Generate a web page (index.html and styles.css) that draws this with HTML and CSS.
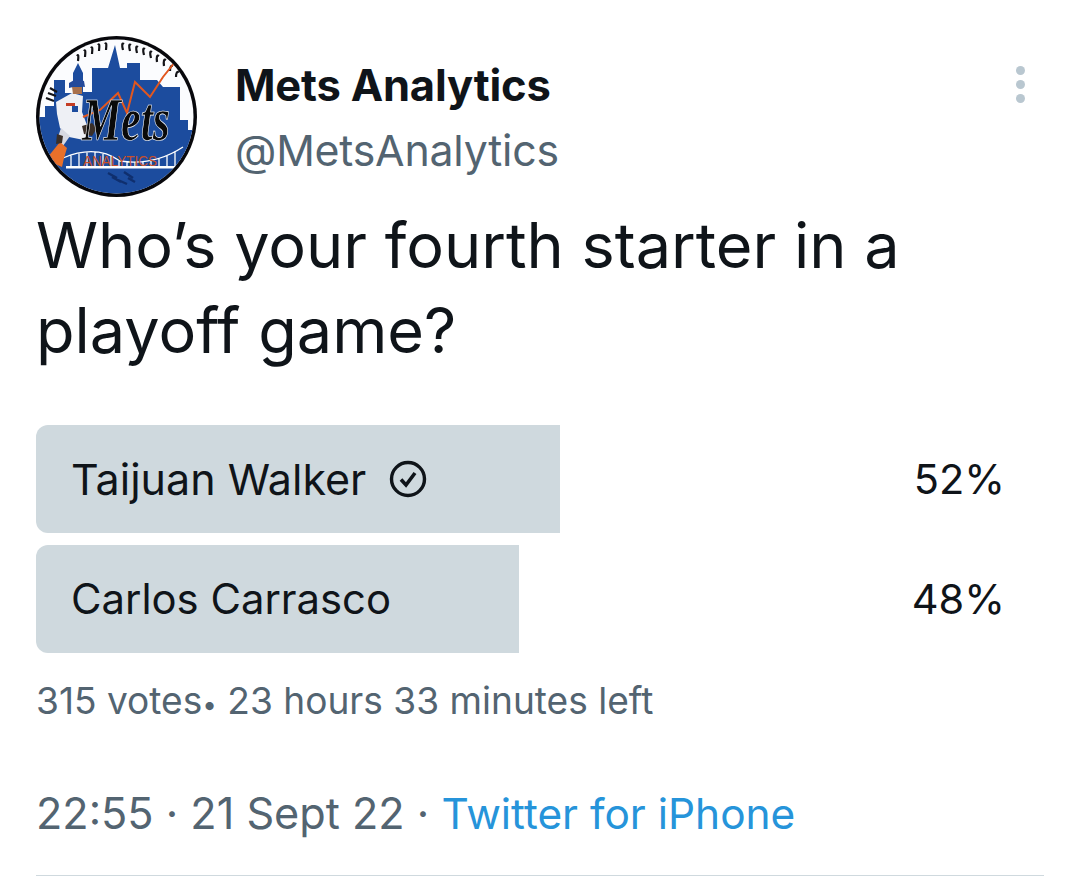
FILE: index.html
```html
<!DOCTYPE html>
<html lang="en">
<head>
<meta charset="utf-8">
<title>Mets Analytics poll</title>
<link rel="stylesheet" href="styles.css">
</head>
<body>
<main class="tweet">
  <header class="head">
    <svg class="avatar" viewBox="0 0 161 161" role="img" aria-label="Mets Analytics logo">
      <defs><clipPath id="ball"><circle cx="80.500" cy="80.500" r="77"/></clipPath></defs>
      <circle cx="80.500" cy="80.500" r="80.500" fill="#08080c"/>
      <g clip-path="url(#ball)">
        <rect width="161" height="161" fill="#fbfcfe"/>
        <path fill="#1c4c9e" d="M0 161V81H9V70H18V44H29V57H37V37L42 27 47 37V56H56V32H72L79 9 84 32H91V27H104V44H121L127 51H144V84H152V94H161V161Z"/>
        <path fill="none" stroke="#141418" stroke-width="2.200" d="M41 20q2-3 1 5M48 15q2-3 1 6M55 12q2-3 1 6M62 9q2-3 1 6M69 8q2-3 1 6M88 8q-3-2-1 6M95 9q-3-2-1 6M102 11q-3-2-1 6M109 13q-3-2-1 6M116 16q-3-2-1 6M123 20q-3-2-2 6M130 24q-3-2-2 6M137 30q-3-1-3 5M143 36q-3-1-3 5M14 52l7 4M12 57l8 3M10 62l8 3"/>
        <path fill="none" stroke="#fff" stroke-width="1.300" d="M27 122Q60 108 84 125 118 130 147 111M35 119V131M43 117V131M51 116V131M59 116V131M67 118V131M75 120V131M83 124V131M91 126V131M99 126V131M107 125V131M115 124V131M123 122V131M131 119V131M139 115V131"/>
        <path fill="#fff" d="M30 130H147V132.500H30Z"/>
        <path fill="none" stroke="#0f2f6e" stroke-width="2.400" d="M72 137l9 5M76 141l9 5M82 144l9 4M88 136l9 6M92 142l7 4"/>
        <path fill="#eef0f5" d="M20 66 36 57 47 60 46 76 54 97 48 104 33 101 24 92 21 78Z"/>
        <path fill="#1c4c9e" d="M36 70h6v6h-6z"/>
        <path fill="#c43d24" d="M30 67h9v3h-9z"/>
        <path fill="#24499a" d="M33 47l7-4 8 2 1 6-8-1-8 2Z"/>
        <path fill="#a8704c" d="M36 51h10v7h-9z"/>
        <path fill="#d7d9e2" d="M25 92 34 100 27 110 21 104Z"/>
        <path fill="#e8702a" d="M11 122 24 106 31 112 28 122 26 131 17 127Z"/>
        <path fill="#3a2f28" d="M21 98l6 2-1 7-6 1ZM46 90l10-3 5 5-5 8-8-2Z"/>
        <path fill="none" stroke="#e2571f" stroke-width="2" d="M47 81 64 74 82 57 91 77 99 46 114 61 127 41 139 26"/>
      </g>
      <g transform="translate(46 104) scale(1 1.400)"><text class="logo-script">Mets</text></g>
      <text class="logo-caption" x="47" y="130" textLength="74" lengthAdjust="spacingAndGlyphs">ANALYTICS</text>
    </svg>
    <div class="identity">
      <div class="name">Mets Analytics</div>
      <div class="handle">@MetsAnalytics</div>
    </div>
    <div class="more" aria-label="More"><i></i><i></i><i></i></div>
  </header>
  <p class="text">Who’s your fourth starter in a playoff game?</p>
  <section class="poll">
    <div class="option">
      <div class="bar bar-first">
        <span>Taijuan Walker</span>
        <svg class="check" viewBox="0 0 38 38" aria-hidden="true"><circle cx="19" cy="19" r="16.500" fill="none" stroke="#0f1419" stroke-width="3.400"/><path d="M12 19.500l5 5.500 9-12" fill="none" stroke="#0f1419" stroke-width="3.600"/></svg>
      </div>
      <span class="pct">52%</span>
    </div>
    <div class="option">
      <div class="bar bar-second"><span>Carlos Carrasco</span></div>
      <span class="pct">48%</span>
    </div>
  </section>
  <p class="votes">315 votes<span class="dot">•</span> 23 hours 33 minutes left</p>
  <p class="meta">22:55 · 21 Sept 22 · <a class="source">Twitter for iPhone</a></p>
  <hr class="rule">
</main>
</body>
</html>
```
FILE: styles.css
```css
* { box-sizing: border-box; }
html, body { margin: 0; padding: 0; background: #fff; }
body { font-family: Inter, "Liberation Sans", sans-serif; color: #0f1419; height: 891px; overflow: hidden; }
.tweet { padding: 36px 36px 0; }
.head { display: flex; align-items: flex-start; height: 161px; }
.avatar { width: 161px; height: 161px; flex: none; }
.logo-script { font-family: "Liberation Serif", serif; font-style: italic; font-weight: 700; font-size: 44px; fill: #0a0a0a; stroke: #fff; stroke-width: .5px; }
.logo-caption { font-family: "Liberation Sans", sans-serif; font-size: 14px; fill: #c9502a; }
.identity { margin-left: 38px; padding-top: 26px; }
.name { font-size: 43.500px; font-weight: 700; line-height: 46px; letter-spacing: -.2px; }
.handle { font-size: 42.800px; line-height: 46px; margin-top: 20px; color: #536471; letter-spacing: -.2px; }
.more { margin-left: auto; margin-right: 19px; margin-top: 30px; display: flex; flex-direction: column; gap: 5px; }
.more i { display: block; width: 9px; height: 9px; border-radius: 50%; background: #b9c7d0; }
.text { margin: 6px 0 0; font-size: 63px; line-height: 85px; width: 900px; }
.poll { margin-top: 52px; display: flex; flex-direction: column; gap: 12px; }
.option { display: flex; justify-content: space-between; align-items: center; height: 108px; padding-right: 39px; font-size: 43px; }
.bar { height: 108px; background: #cfd9de; border-radius: 12px 0 0 12px; display: flex; align-items: center; padding-left: 35px; gap: 23px; }
.bar-first { width: 524px; }
.bar-second { width: 483px; font-size: 41.800px; }
.pct { font-size: 41.500px; }
.check { width: 38px; height: 38px; flex: none; }
.votes { margin: 26px 0 0; font-size: 37.100px; line-height: 44px; color: #536471; }
.dot { font-size: 26px; line-height: 0; }
.meta { margin: 65px 0 0; font-size: 43.200px; line-height: 50px; color: #536471; }
.source { color: #2694da; font-size: 42.400px; line-height: 0; }
.rule { margin: 37px 0 0; border: 0; border-top: 1px solid #cfd9de; }
```
